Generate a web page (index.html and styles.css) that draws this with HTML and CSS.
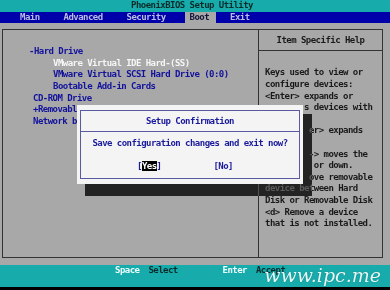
FILE: index.html
```html
<!DOCTYPE html>
<html lang="en">
<head>
    <meta charset="UTF-8">
    <meta name="viewport" content="width=device-width, initial-scale=1.0">
    <title>PhoenixBIOS Setup Utility</title>
    <link rel="stylesheet" href="styles.css">
</head>
<body>
    <div class="screen">
        <div class="title-bar">PhoenixBIOS Setup Utility</div>

        <nav class="menu-bar">
            <span class="menu-item">Main</span>
            <span class="menu-item">Advanced</span>
            <span class="menu-item">Security</span>
            <span class="menu-item active">Boot</span>
            <span class="menu-item">Exit</span>
        </nav>

        <div class="content">
            <div class="frame">
                <!-- rows under the popup only keep the part that shows -->
                <div class="boot-list">
                    <div class="line group">-Hard Drive</div>
                    <div class="line device selected">VMware Virtual IDE Hard-(SS)</div>
                    <div class="line device">VMware Virtual SCSI Hard Drive (0:0)</div>
                    <div class="line device">Bootable Add-in Cards</div>
                    <div class="line item">CD-ROM Drive</div>
                    <div class="line item">+Removable</div>
                    <div class="line item">Network b</div>
                </div>

                <div class="help-panel">
                    <div class="help-title">Item Specific Help</div>
                    <div class="help-text">
                        <div class="line">Keys used to view or</div>
                        <div class="line">configure devices:</div>
                        <div class="line">&lt;Enter&gt; expands or</div>
                        <div class="line">        s devices with</div>
                        <div class="line"></div>
                        <div class="line">         er&gt; expands</div>
                        <div class="line"></div>
                        <div class="line">         -&gt; moves the</div>
                        <div class="line">          or down.</div>
                        <div class="line">         ove removable</div>
                        <div class="line">device between Hard</div>
                        <div class="line">Disk or Removable Disk</div>
                        <div class="line">&lt;d&gt; Remove a device</div>
                        <div class="line">that is not installed.</div>
                    </div>
                </div>
            </div>
        </div>

        <div class="key-bar">
            <span class="key">Space</span><span class="key-desc">Select</span>
            <span class="key">Enter</span><span class="key-desc">Accept</span>
        </div>

        <!-- confirmation popup drawn over the boot page -->
        <div class="dialog-shadow"></div>
        <div class="dialog">
            <div class="dialog-inner">
                <div class="dialog-title">Setup Confirmation</div>
                <div class="dialog-body">
                    <div class="line">Save configuration changes and exit now?</div>
                    <div class="dialog-buttons">
                        <span class="btn">[<span class="btn-focus">Yes</span>]</span>
                        <span class="btn">[No]</span>
                    </div>
                </div>
            </div>
        </div>

        <div class="watermark">www.ipc.me</div>
    </div>
</body>
</html>
```

FILE: styles.css
```css
* {
    margin: 0;
    padding: 0;
    box-sizing: border-box;
}

body {
    background-color: #000;
    width: 390px;
    height: 290px;
    overflow: hidden;
    font-family: 'DejaVu Sans Mono', 'Liberation Mono', monospace;
    font-weight: bold;
    font-size: 9px;
    letter-spacing: -0.54px;
}

.screen {
    position: relative;
    width: 390px;
    height: 287px;
}

.line {
    height: 11.6px;
    line-height: 11.6px;
    white-space: pre;
}

/* top bars */
.title-bar {
    height: 11.6px;
    line-height: 11.6px;
    background-color: #17abab;
    color: #0b2b2b;
    text-align: center;
    padding-right: 6px;
}

.menu-bar {
    display: flex;
    height: 11.2px;
    line-height: 11.2px;
    padding-left: 8px;
    background-color: #0000aa;
    color: #bcbce2;
}

.menu-item {
    padding: 0 12px;
}

.menu-item.active {
    background-color: #a8a8a8;
    color: #14143c;
    margin: 0 2px 0 7px;
    padding: 0 7px 0 5px;
}

/* main area */
.content {
    height: 242px;
    background-color: #a8a8a8;
    padding: 6px 7px 0 2px;
}

.frame {
    display: grid;
    grid-template-columns: 255px 1fr;
    height: 229px;
    border: 1px solid #333;
}

.boot-list {
    padding-top: 16.4px;
    color: #12129c;
}

.group {
    padding-left: 26px;
}

.device {
    padding-left: 50px;
}

.item {
    padding-left: 30px;
}

.selected {
    color: #f6f6f6;
}

.help-panel {
    border-left: 1px solid #333;
    color: #1a1a1a;
}

.help-title {
    height: 21px;
    line-height: 21px;
    text-align: center;
    border-bottom: 1px solid #333;
}

.help-text {
    padding: 16.6px 0 0 6px;
}

/* bottom key legend */
.key-bar {
    height: 22px;
    line-height: 11.6px;
    padding-left: 115px;
    background-color: #17abab;
}

.key {
    color: #eefefe;
    margin-right: 9px;
}

.key-desc {
    color: #0b2b2b;
    margin-right: 40px;
}

/* popup */
.dialog-shadow {
    position: absolute;
    left: 85px;
    top: 114px;
    width: 227px;
    height: 82px;
    z-index: 1;
    backdrop-filter: invert(1) brightness(0.4);
}

.dialog {
    position: absolute;
    left: 77px;
    top: 105px;
    width: 226px;
    height: 79px;
    padding: 5px 3px;
    background-color: #f4f4f4;
    z-index: 2;
}

.dialog-inner {
    height: 100%;
    border: 1px solid #5a5aa0;
    color: #1a1a9c;
}

.dialog-title {
    height: 21px;
    line-height: 21px;
    text-align: center;
    border-bottom: 1px solid #5a5aa0;
}

.dialog-body {
    padding-top: 6px;
    text-align: center;
}

.dialog-buttons {
    display: flex;
    gap: 52px;
    height: 11.6px;
    line-height: 11.6px;
    margin-top: 11.6px;
    padding-left: 56px;
}

.btn-focus {
    background-color: #000;
    color: #fff;
}

.watermark {
    position: absolute;
    right: 9px;
    bottom: 1px;
    z-index: 3;
    font-family: 'DejaVu Serif', serif;
    font-style: italic;
    font-weight: normal;
    font-size: 19px;
    letter-spacing: 0;
    color: #e6f8f8;
    text-shadow: 0 0 1px #0c6e6e;
}
```
